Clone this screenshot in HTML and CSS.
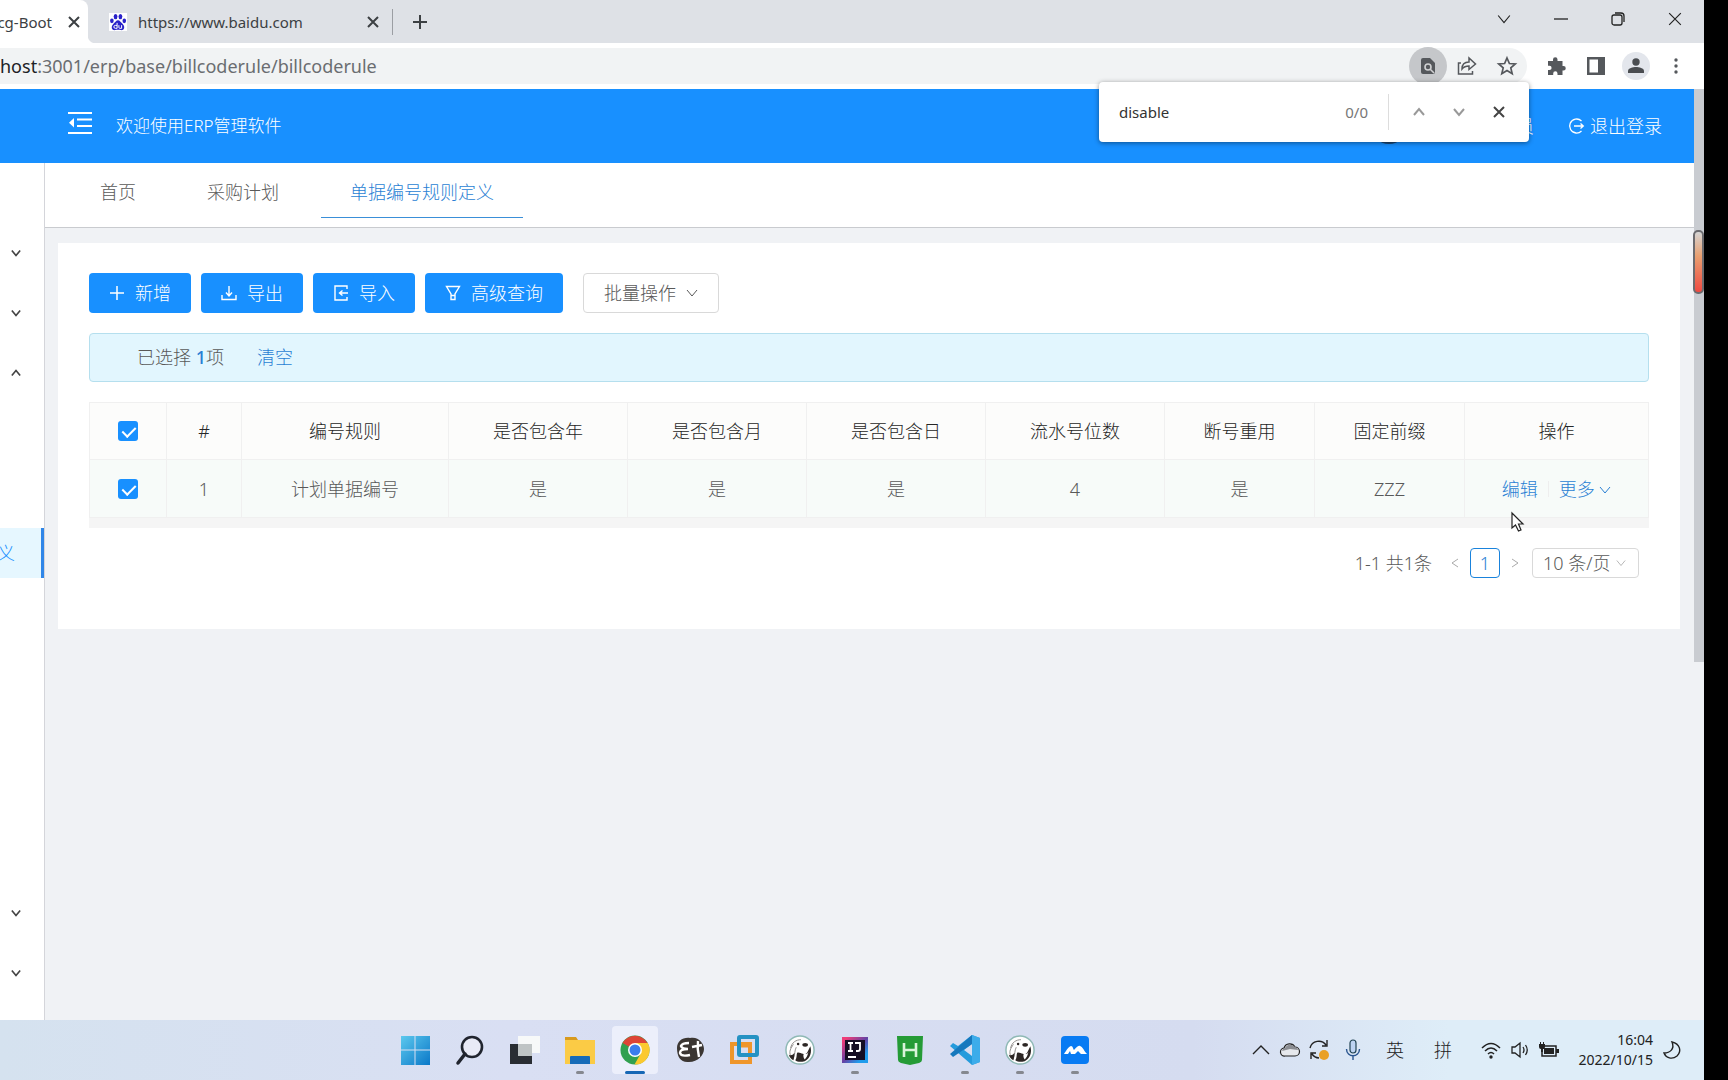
FILE: index.html
```html
<!DOCTYPE html>
<html lang="zh-CN">
<head>
<meta charset="utf-8">
<meta name="viewport" content="width=device-width, initial-scale=1">
<title>单据编号规则定义</title>
<link rel="stylesheet" href="styles.css">
</head>
<body>
<svg width="0" height="0" class="sprite" aria-hidden="true">
  <symbol id="x" viewBox="0 0 12 12"><path d="M1 1l10 10M11 1L1 11" fill="none" stroke="currentColor"/></symbol>
  <symbol id="down" viewBox="0 0 12 12"><path d="M1 3l5 6 5-6" fill="none" stroke="currentColor"/></symbol>
  <symbol id="up" viewBox="0 0 12 12"><path d="M1 9l5-6 5 6" fill="none" stroke="currentColor"/></symbol>
  <symbol id="beaver" viewBox="0 0 32 32">
    <circle cx="16" cy="16" r="15" fill="#fff" stroke="#8fb9b5" stroke-width="1.600"/>
    <path d="M6 14c1-6 6-9 11-9M9 10c-3 4-5 8-3 12M12 13c-2 4-1 7-3 11" fill="none" stroke="#8d8a88" stroke-width="1"/>
    <path d="M4 21c1 3 3 5 5 6 1-3 1-5 1-8-2 3-4 3-6 2zM13 19c2-1 4 1 6 1 2 1 4 0 5-2l3-6c2 6 0 13-6 16-4 1-8 1-10-1 2-3 1-6 2-8z" fill="#2c2624"/>
    <path d="M20 20c2 1 4 0 5-2-1 4-2 6-4 8-1-1-2-4-1-6z" fill="#fff"/>
    <ellipse cx="21.500" cy="10.500" rx="3" ry="2" fill="#2c2624"/><circle cx="14" cy="9.500" r="1.300" fill="#2c2624"/>
  </symbol>
</svg>
<div class="desktop">
<main class="screen">
  <div class="tabstrip">
    <div class="btab active"><span class="clip">cg-Boot</span><button class="plain" aria-label="关闭标签页"><svg class="i12 bold"><use href="#x"/></svg></button></div>
    <div class="btab second">
      <svg class="i18" viewBox="0 0 20 20"><rect width="20" height="20" fill="#fff"/><g fill="#2a22c9"><ellipse cx="7.300" cy="4" rx="2.100" ry="3"/><ellipse cx="12.700" cy="4" rx="2.100" ry="3"/><ellipse cx="3.200" cy="8.700" rx="2" ry="2.600"/><ellipse cx="17" cy="8.700" rx="2" ry="2.600"/><path d="M10 8c2 0 3 2 5 4 4 4 1 8-2 7-2-.6-4-.6-6 0-3 1-6-3-2-7 2-2 3-4 5-4z"/></g><path d="M9 11v6H7a1.600 1.600 0 010-3.200h2M11 13.500v2.500q0 1 1 1h2v-3.500" fill="none" stroke="#fff" stroke-width="1.100"/></svg>
      <span class="grow">https://www.baidu.com</span>
      <button class="plain" aria-label="关闭标签页"><svg class="i12 bold"><use href="#x"/></svg></button>
    </div>
    <span class="tabline"></span>
    <button class="plain newtab" aria-label="新建标签页"><svg class="i14" viewBox="0 0 14 14"><path d="M7 0v14M0 7h14" stroke="currentColor" stroke-width="2"/></svg></button>
    <div class="winctl">
      <button class="plain" aria-label="搜索标签页"><svg class="i14 thin"><use href="#down"/></svg></button>
      <button class="plain" aria-label="最小化"><svg class="i14" viewBox="0 0 14 14"><path d="M0 7h14" stroke="currentColor" stroke-width="1.300"/></svg></button>
      <button class="plain" aria-label="还原"><svg class="i14" viewBox="0 0 14 14"><rect x="1" y="3" width="10" height="10" rx="2" fill="none" stroke="currentColor" stroke-width="1.300"/><path d="M4 1h6q3 0 3 3v6" fill="none" stroke="currentColor" stroke-width="1.300"/></svg></button>
      <button class="plain" aria-label="关闭"><svg class="i14 thin"><use href="#x"/></svg></button>
    </div>
  </div>

  <div class="toolbar">
    <div class="omnibox">
      <span class="url"><b>host</b>:3001/erp/base/billcoderule/billcoderule</span>
      <button class="plain find-badge" aria-label="查找"><svg class="i18" viewBox="0 0 18 18"><path d="M2 3q0-2 2-2h7l5 5v9q0 2-2 2H4q-2 0-2-2z" fill="#55585c"/><circle cx="9" cy="10" r="3" fill="none" stroke="#d0d1d3" stroke-width="1.600"/><path d="M11 12l4 4" stroke="#d0d1d3" stroke-width="1.600"/></svg></button>
      <button class="plain" aria-label="分享"><svg class="i20" viewBox="0 0 20 20"><path d="M4 7H1.500v11h14v-3M5 13c0-5 3-7 7-7V2l6.500 6-6.500 5.500V10c-3 0-5 .5-7 3z" fill="none" stroke="currentColor" stroke-width="1.500"/></svg></button>
      <button class="plain" aria-label="收藏"><svg class="i20" viewBox="0 0 20 20"><path d="M10 2l2.400 5.500 5.900.5-4.500 3.900 1.400 5.800L10 14.600l-5.200 3.100 1.400-5.800L1.700 8l5.900-.5z" fill="none" stroke="currentColor" stroke-width="1.700"/></svg></button>
    </div>
    <button class="plain" aria-label="扩展程序"><svg class="i20" viewBox="0 0 20 20"><path d="M2 5h5V3.500a2 2 0 014.500 0V5h5v5h1a2 2 0 010 4.500h-1V19h-5v-1.500a2 2 0 00-4.300 0V19H2v-5h1.500a2 2 0 000-4.200H2z" fill="#55585c"/></svg></button>
    <button class="plain" aria-label="侧边栏"><svg class="i18" viewBox="0 0 18 18"><path d="M0 0h18v18H0zM2.500 2.500v13H11v-13z" fill="#55585c" fill-rule="evenodd"/></svg></button>
    <button class="plain avatar" aria-label="个人资料"><svg class="i16" viewBox="0 0 16 16"><circle cx="8" cy="4" r="3.700" fill="#4a4d51"/><path d="M0 15v-2c0-3 5-4 8-4s8 1 8 4v2z" fill="#4a4d51"/></svg></button>
    <button class="plain" aria-label="菜单"><svg class="i16" viewBox="0 0 16 16"><g fill="#55585c"><circle cx="8" cy="2" r="1.700"/><circle cx="8" cy="8" r="1.700"/><circle cx="8" cy="14" r="1.700"/></g></svg></button>
  </div>

  <form class="findbar">
    <input type="text" value="disable" aria-label="在页面中查找"><span class="count">0/0</span><span class="vline"></span>
    <button type="button" class="plain faint" aria-label="上一个"><svg class="i12 mid"><use href="#up"/></svg></button>
    <button type="button" class="plain faint" aria-label="下一个"><svg class="i12 mid"><use href="#down"/></svg></button>
    <button type="button" class="plain" aria-label="关闭查找"><svg class="i12 bold"><use href="#x"/></svg></button>
  </form>

  <div class="viewport">
    <div class="site">
      <header class="header">
        <button class="plain fold" aria-label="收起菜单"><svg viewBox="0 0 24 22"><path d="M0 1h24M9 7.500h15M9 14h15M0 21h24" stroke="#fff" stroke-width="2"/><path d="M6 6v9.500L1 10.700z" fill="#fff"/></svg></button>
        <span class="grow title">欢迎使用ERP管理软件</span>
        <span class="photo"></span>
        <span class="user">员</span>
        <a class="logout" href="#"><svg class="i16" viewBox="0 0 16 16"><path d="M13.500 3A7 7 0 108 15a7 7 0 005.500-2M6 8h9M12.500 5.500L15.300 8l-2.800 2.500" fill="none" stroke="#fff" stroke-width="1.300"/></svg>退出登录</a>
      </header>
      <div class="body">
        <nav class="side" aria-label="主菜单">
          <button class="plain row" aria-label="展开"><svg class="i10 mid"><use href="#down"/></svg></button>
          <button class="plain row" aria-label="展开"><svg class="i10 mid"><use href="#down"/></svg></button>
          <button class="plain row" aria-label="收起"><svg class="i10 mid"><use href="#up"/></svg></button>
          <span class="row"></span><span class="row"></span>
          <a class="row current" href="#"><span>义</span></a>
          <span class="row"></span><span class="row"></span><span class="row"></span><span class="row"></span><span class="row"></span>
          <button class="plain row" aria-label="展开"><svg class="i10 mid"><use href="#down"/></svg></button>
          <button class="plain row" aria-label="展开"><svg class="i10 mid"><use href="#down"/></svg></button>
        </nav>
        <div class="main">
          <nav class="tabs" aria-label="页签"><a href="#">首页</a><a href="#">采购计划</a><a href="#" class="on">单据编号规则定义</a></nav>
          <section class="card">
            <div class="actions">
              <button class="btn"><svg class="i16" viewBox="0 0 16 16"><path d="M8 1v14M1 8h14" stroke="currentColor" stroke-width="1.500"/></svg>新增</button>
              <button class="btn"><svg class="i16" viewBox="0 0 16 16"><path d="M1 10v4.500h14V10M8 1v9M5 7.500L8 11l3-3.500" fill="none" stroke="currentColor" stroke-width="1.400"/></svg>导出</button>
              <button class="btn"><svg class="i16" viewBox="0 0 16 16"><path d="M14 4V1H2v14h12v-3M15 8H7M9.500 5.500L6.500 8l3 2.500" fill="none" stroke="currentColor" stroke-width="1.400"/></svg>导入</button>
              <button class="btn"><svg class="i16" viewBox="0 0 16 16"><path d="M1.500 1.500h13L10 9v5.500H6V9zM6 10.500h4" fill="none" stroke="currentColor" stroke-width="1.400"/></svg>高级查询</button>
              <button class="btn ghost">批量操作<svg class="i12 thin"><use href="#down"/></svg></button>
            </div>
            <div class="notice"><span>已选择 <b>1</b>项</span><a href="#">清空</a></div>
            <div class="scroller">
            <table>
              <colgroup><col class="c1"><col class="c2"><col class="c3"><col class="c4"><col class="c4"><col class="c4"><col class="c4"><col class="c5"><col class="c5"><col class="c6"></colgroup>
              <thead><tr><th><input type="checkbox" checked aria-label="全选"></th><th>#</th><th>编号规则</th><th>是否包含年</th><th>是否包含月</th><th>是否包含日</th><th>流水号位数</th><th>断号重用</th><th>固定前缀</th><th>操作</th></tr></thead>
              <tbody><tr><td><input type="checkbox" checked aria-label="选择第1行"></td><td>1</td><td>计划单据编号</td><td>是</td><td>是</td><td>是</td><td>4</td><td>是</td><td>ZZZ</td><td><div class="ops"><a href="#">编辑</a><span class="sep"></span><a href="#">更多 <svg class="i12 thin"><use href="#down"/></svg></a></div></td></tr></tbody>
            </table>
            </div>
            <div class="pager">
              <span class="total">1-1 共1条</span>
              <button class="plain" aria-label="上一页"><svg class="i10" viewBox="0 0 10 10"><path d="M8 1L2 5l6 4" fill="none" stroke="currentColor"/></svg></button>
              <button class="page">1</button>
              <button class="plain" aria-label="下一页"><svg class="i10" viewBox="0 0 10 10"><path d="M2 1l6 4-6 4" fill="none" stroke="currentColor"/></svg></button>
              <label class="size"><select aria-label="每页条数"><option>10 条/页</option></select><svg class="i10 thin"><use href="#down"/></svg></label>
            </div>
          </section>
        </div>
      </div>
    </div>
    <div class="scrollbar"><span class="thumb"></span><span class="marker"></span></div>
  </div>

  <footer class="taskbar">
    <div class="apps">
      <button class="plain app" aria-label="开始"><svg viewBox="0 0 30 30"><defs><linearGradient id="w" x2="1" y2="1"><stop stop-color="#5cc8ee"/><stop offset="1" stop-color="#0a78c8"/></linearGradient></defs><path d="M1 1h13.500v13.500H1zM15.500 1H30v13.500H15.500zM1 15.500h13.500V30H1zM15.500 15.500H30V30H15.500z" fill="url(#w)"/></svg></button>
      <button class="plain app" aria-label="搜索"><svg viewBox="0 0 30 30"><circle cx="17" cy="12" r="10" fill="#e8eaf6" stroke="#20242e" stroke-width="2.600"/><path d="M10 19L3 28" stroke="#20242e" stroke-width="3.500" stroke-linecap="round"/></svg></button>
      <button class="plain app" aria-label="任务视图"><svg viewBox="0 0 30 30"><path d="M0 9h22v20H0z" fill="#292d33"/><path d="M8 1h22v17H8z" fill="#f7f9f9"/><path d="M8 9h14v12H8z" fill="#bfc4c5"/></svg></button>
      <button class="plain app" aria-label="文件资源管理器"><svg viewBox="0 0 30 30"><path d="M0 2h11l2 3h17v12H0z" fill="#d89a1d"/><path d="M0 5h30v24H0z" fill="#fbcb45"/><path d="M5 29v-7q0-1 1-1h18q1 0 1 1v7z" fill="#176bb8"/></svg><i class="dot"></i></button>
      <button class="plain app open" aria-label="Chrome"><svg viewBox="0 0 30 30"><circle cx="15" cy="15" r="14.500" fill="#31a04f"/><path d="M15 15L2.500 8A14.500 14.500 0 0127.500 8z" fill="#de4436"/><path d="M15 8h12.800A14.500 14.500 0 0114.500 29.500L21 18z" fill="#fbc92f"/><circle cx="15" cy="15" r="7" fill="#fff"/><circle cx="15" cy="15" r="5.500" fill="#3b7ded"/></svg><i class="dot wide"></i></button>
      <button class="plain app" aria-label="E+"><svg viewBox="0 0 30 30"><path d="M2 13C2 6 8 2 15 3c8-2 14 5 14 11s-6 13-15 13C6 28 2 22 2 13z" fill="#3b3632"/><path d="M14 8q-7 0-8 3 1 3 7 3-8 0-8 4 1 4 10 2M17 12l10-2M23 6q-1 8 1 16" fill="none" stroke="#fff" stroke-width="2.400"/></svg></button>
      <button class="plain app" aria-label="VMware"><svg viewBox="0 0 30 30"><rect x="2" y="9" width="18" height="18" fill="none" stroke="#ef962b" stroke-width="4"/><rect x="9" y="2" width="18" height="18" rx="1" fill="none" stroke="#2592c3" stroke-width="4"/><path d="M11 11h9v3" fill="none" stroke="#ef962b" stroke-width="3"/></svg></button>
      <button class="plain app" aria-label="DBeaver"><svg><use href="#beaver"/></svg></button>
      <button class="plain app" aria-label="IntelliJ IDEA"><svg viewBox="0 0 30 30"><defs><linearGradient id="ij" x2="1" y2="1"><stop offset=".1" stop-color="#ef3c78"/><stop offset=".5" stop-color="#6442a5"/><stop offset=".8" stop-color="#209cec"/></linearGradient></defs><path d="M2 2h26v26H2z" fill="url(#ij)"/><path d="M5 5h20v20H5z" fill="#140e23"/><path d="M8 8h5M10.500 8v8M8 16h5M15 8h5v6q0 2-2 2h-2M8 22h8" fill="none" stroke="#fff" stroke-width="1.800"/></svg><i class="dot"></i></button>
      <button class="plain app" aria-label="HBuilder"><svg viewBox="0 0 30 30"><path d="M2 1h26l-1 24q0 2-3 3l-9 2-9-2q-3-1-3-3z" fill="#259b36"/><path d="M9 8v14M21 8v14M9 15h12" stroke="#d9f3da" stroke-width="2.600"/></svg></button>
      <button class="plain app" aria-label="VS Code"><svg viewBox="0 0 30 30"><path d="M22 0l8 3v24l-8 3-22-19 3-3 5 3zM22 9l-8 6 8 6z" fill="#249bdc" fill-rule="evenodd"/><path d="M3 22l-3-3L22 0v9L3 22z" fill="#1678bd"/><path d="M22 0l8 3v24l-8 3z" fill="#3cacea"/></svg><i class="dot"></i></button>
      <button class="plain app" aria-label="DBeaver"><svg><use href="#beaver"/></svg><i class="dot"></i></button>
      <button class="plain app" aria-label="腾讯会议"><svg viewBox="0 0 30 30"><rect x="1" y="1" width="28" height="28" rx="4" fill="#087bf3"/><path d="M4 19c2-3 4-7 7-8 2 0 2 3 3 4 2-2 4-5 6-4 3 1 4 5 7 8h-6l-3-3-3 3h-4l-1-3-2 3z" fill="#fff"/></svg><i class="dot"></i></button>
    </div>
    <div class="tray">
      <svg class="t20 thin" viewBox="0 0 20 20"><path d="M2 14l8-8 8 8" fill="none" stroke="currentColor" stroke-width="1.400"/></svg>
      <svg class="t20" viewBox="0 0 20 20"><path d="M5 16a4 4 0 01-1-8 6 6 0 0111-1 4.500 4.500 0 010 9z" fill="#e6e8ec" stroke="#222" stroke-width="1.200"/><path d="M2 11q1-3 3-3a6 6 0 0110-1c2 1 3 2 3 3l-8-1z" fill="#8b8d92"/></svg>
      <svg class="t20" viewBox="0 0 20 20"><path d="M1 8a9 9 0 0116-3M18 0v6h-5M10 18a9 9 0 01-7-4M2 19v-6h5" fill="none" stroke="#222" stroke-width="1.400"/><circle cx="15" cy="15" r="5" fill="#e9a025"/></svg>
      <svg class="t20 mic" viewBox="0 0 20 20"><rect x="7" y="0" width="6" height="13" rx="3" fill="#bdd3f2" stroke="#245" stroke-width="1.200"/><path d="M3.500 9c0 9 13 9 13 0M10 16v4" fill="none" stroke="#2a5590" stroke-width="1.400"/></svg>
      <span class="ime">英</span><span class="ime last">拼</span>
      <svg class="t20" viewBox="0 0 20 20"><path d="M1 8q9-9 18 0M4 11q6-6 12 0M7 14q3-3 6 0" fill="none" stroke="#222" stroke-width="1.500"/><circle cx="10" cy="17" r="1.700" fill="#222"/></svg>
      <svg class="t20" viewBox="0 0 20 20"><path d="M2 7h3l5-4v14l-5-4H2zM13 7q2 3 0 6M15.500 5q3.500 5 0 10" fill="none" stroke="#222" stroke-width="1.300"/></svg>
      <svg class="t20" viewBox="0 0 20 20"><path d="M5 6h12v10H3v-5" fill="none" stroke="#222" stroke-width="1.500"/><path d="M5 8h10v6H5zM17 9h3v4h-3zM0 4h6v3q0 2-2 2v3H2V9Q0 9 0 7zM1 2h1v2H1zM4 2h1v2H4z" fill="#222"/></svg>
      <div class="clock"><span>16:04</span><span>2022/10/15</span></div>
      <svg class="t20" viewBox="0 0 20 20"><path d="M10 2c8 2 10 9 5 14-5 4-11 2-13-3 6 0 11-4 8-11z" fill="none" stroke="#222" stroke-width="1.400"/></svg>
    </div>
  </footer>
  <svg class="cursor" viewBox="0 0 13 20"><path d="M1 1v15l3.500-3 3 6 2.500-1-2.500-6H12z" fill="#fff" stroke="#222" stroke-width="1.200"/></svg>
</main>
</div>
</body>
</html>
```

FILE: styles.css
```css
* { box-sizing: border-box; }
body {
  margin: 0;
  background: #000;
  color: #595959;
  font: 300 18px/24px "Noto Sans", "Noto Sans CJK SC Light", "Noto Sans CJK SC", sans-serif;
}
a { color: inherit; text-decoration: none; }
button, input, select { font: inherit; color: inherit; }
.sprite { position: absolute; }
.desktop { padding-right: 24px; }
.screen { position: relative; display: flex; flex-direction: column; min-height: 100vh; background: #f0f2f5; overflow: hidden; }
.plain { display: flex; align-items: center; justify-content: center; flex: none; padding: 0; border: 0; background: none; }
.grow { flex: 1; }
svg { flex: none; overflow: visible; }
.i10 { width: 10px; height: 10px; }
.i12 { width: 12px; height: 12px; }
.i14 { width: 14px; height: 14px; }
.i16 { width: 16px; height: 16px; }
.i18 { width: 18px; height: 18px; }
.i20, .t20 { width: 20px; height: 20px; }
.thin { stroke-width: 1px; }
.mid { stroke-width: 2px; }
.bold { stroke-width: 2px; }

/* browser chrome */
.tabstrip, .toolbar, .findbar, .taskbar { font-weight: 400; }
.tabstrip { display: flex; align-items: center; height: 43px; background: #dee1e6; color: #3c4043; font-size: 15px; }
.btab { display: flex; align-items: center; height: 43px; }
.active { position: relative; width: 88px; padding-right: 8px; justify-content: flex-end; gap: 16px; background: #fff; border-top-right-radius: 8px; }
.active::after { content: ""; position: absolute; left: 100%; bottom: 0; width: 8px; height: 8px; background: radial-gradient(circle at 100% 0, #dee1e6 8px, #fff 9px); }
.clip { display: flex; justify-content: flex-end; width: 52px; overflow: hidden; white-space: nowrap; }
.second { width: 304px; padding: 0 13px 0 21px; gap: 11px; }
.tabline { width: 1px; height: 26px; background: #9b9ea3; }
.newtab { width: 54px; height: 40px; }
.winctl { display: flex; margin: 0 1px 0 auto; color: #222; }
.winctl button { width: 57px; height: 36px; margin-bottom: 6px; }
.toolbar { display: flex; align-items: center; height: 46px; padding-right: 8px; background: #fff; color: #55585c; }
.toolbar > button { width: 40px; height: 40px; }
.omnibox { display: flex; align-items: center; flex: 1; height: 36px; margin-right: 9px; border-radius: 0 18px 18px 0; background: #f1f3f4; }
.omnibox button { width: 40px; height: 36px; }
.url { flex: 1; color: #6a6d71; }
.url b { font-weight: 400; color: #202124; }
.omnibox .find-badge { height: 38px; width: 38px; border-radius: 50%; background: #c5c7ca; }
.avatar svg { box-sizing: content-box; padding: 6px; border-radius: 50%; background: #e3e6ec; }
.findbar {
  position: absolute; z-index: 3; top: 82px; right: 175px;
  display: flex; align-items: center; width: 430px; height: 60px; padding: 0 10px 0 16px;
  border-radius: 4px; background: #fff; color: #444; font-size: 15px;
  box-shadow: 0 1px 5px rgba(0, 0, 0, .45);
}
.findbar input { flex: 1; min-width: 0; padding: 0 4px; border: 0; outline: 0; color: #333; }
.findbar button { width: 40px; height: 40px; }
.count { color: #777; }
.vline { width: 1px; height: 36px; margin: 0 10px 0 20px; background: #ddd; }
.findbar .faint { color: #999; }

/* application shell */
.viewport { display: flex; flex: 1; }
.site { display: flex; flex-direction: column; flex: 1; }
.header { display: flex; align-items: center; height: 74px; padding: 0 32px 0 68px; background: #1890ff; color: #fff; }
.title { font-size: 17px; }
.fold { width: 24px; margin: 0 24px 6px 0; }
.fold svg { width: 24px; height: 22px; }
.photo { width: 36px; height: 36px; margin-right: 109px; border-radius: 50%; background: #1a4775; }
.user { margin-right: 34px; }
.logout { display: flex; align-items: center; gap: 6px; }
.body { display: flex; flex: 1; }
.side { display: flex; flex-direction: column; gap: 10px; width: 45px; padding-top: 65px; border-right: 1px solid #d4d5da; background: #fff; }
.row { display: flex; align-items: center; justify-content: flex-start; height: 50px; padding-left: 11px; color: #444; }
.current { padding: 0; background: #e6f7ff; border-right: 3px solid #2f86e8; color: #1890ff; }
.current span { display: flex; justify-content: flex-end; width: 15px; overflow: hidden; }
.main { flex: 1; min-width: 0; }
.tabs { display: flex; gap: 13px; height: 65px; padding: 0 26px; border-bottom: 1px solid #c9cbcf; background: #fff; }
.tabs a { height: 55px; padding: 17px 29px 0; }
.tabs .on { border-bottom: 1px solid #3a8fd8; color: #2a7fd4; }

/* list card */
.card { margin: 15px 14px 0 13px; padding: 30px 31px 51px; background: #fff; }
.actions { display: flex; gap: 10px; }
.btn { display: flex; align-items: center; gap: 10px; height: 40px; padding: 0 20px; border: 0; border-radius: 4px; background: #1890ff; color: #fff; }
.ghost { margin-left: 10px; padding: 0 20px; border: 1px solid #d9d9d9; background: #fff; color: #595959; }
.notice { display: flex; gap: 33px; height: 49px; margin: 20px 0; padding: 11px 47px; border: 1px solid #b5dfee; border-radius: 4px; background: #e2f6fe; }
.notice b { font-weight: 500; color: #2a7fd4; }
.notice a, .ops { color: #2a7fd4; }
.scroller { padding-bottom: 10px; background: #f5f5f5; }
table { width: 100%; table-layout: fixed; border-collapse: separate; border-spacing: 0; border: 1px solid #f0f0f0; border-width: 1px 0 0 1px; }
th, td { padding: 0; border: 1px solid #f0f0f0; border-width: 0 1px 1px 0; text-align: center; font-weight: 300; }
th { height: 57px; background: #fcfcfb; color: #262626; }
td { height: 58px; background: #f7fbf9; }
.c1 { width: 77px; }
.c2 { width: 75px; }
.c3 { width: 207px; }
.c4 { width: 179px; }
.c5 { width: 150px; }
input[type="checkbox"] { display: block; appearance: none; position: relative; width: 20px; height: 20px; margin: 0 auto; border-radius: 3px; background: #1890ff; }
input[type="checkbox"]::after { content: ""; position: absolute; left: 7px; top: 3px; width: 6px; height: 11px; border: solid #fff; border-width: 0 2px 2px 0; transform: rotate(45deg); }
.ops { display: flex; align-items: center; justify-content: center; gap: 10px; }
.sep { width: 1px; height: 16px; background: #eee; }
.pager { display: flex; align-items: center; justify-content: flex-end; height: 30px; margin: 20px 10px 0 0; }
.pager .plain { width: 30px; height: 30px; color: #aaa; }
.total { margin-right: 8px; }
.page { width: 30px; height: 30px; padding: 0; border: 1px solid #1a83dc; border-radius: 4px; background: #fff; color: #2a7fd4; }
.size { display: flex; align-items: center; width: 107px; height: 30px; margin-left: 2px; padding: 0 12px 0 10px; border: 1px solid #d9d9d9; border-radius: 4px; color: #aaa; }
.size select { flex: 1; min-width: 0; padding: 0; border: 0; appearance: none; background: none; color: #595959; }

.scrollbar { position: relative; width: 10px; background: #f0f2f5; }
.thumb { display: block; height: 573px; background: #c9ccd1; }
.marker { position: absolute; top: 141px; right: 0; width: 11px; height: 64px; border: 2px solid #6b6b6f; border-radius: 5px; background: linear-gradient(#d5d5d5, #e9a070 40%, #ef4a42); }

/* desktop taskbar */
.taskbar { display: flex; align-items: center; height: 60px; padding: 0 22px 0 392px; background: linear-gradient(90deg, #d5e2ef, #d9dff3 30%, #d5dcf0 70%, #deedf8 85%); color: #222; }
.apps { display: flex; gap: 9px; }
.app { position: relative; width: 46px; height: 48px; border-radius: 4px; }
.app > svg { width: 30px; height: 30px; }
.open { background: #eceffb; }
.dot { position: absolute; bottom: 0; left: 19px; width: 8px; height: 3px; border-radius: 2px; background: #85888f; }
.dot.wide { left: 13px; width: 20px; background: #1667b5; }
.tray { display: flex; align-items: center; gap: 9px; margin-left: auto; }
.mic { margin: 0 5px; }
.ime { width: 20px; margin: 0 10px 0 9px; }
.last { margin-right: 18px; }
.clock { display: flex; flex-direction: column; width: 85px; text-align: right; font-size: 14px; line-height: 20px; }
.cursor { position: absolute; z-index: 4; top: 512px; right: 180px; width: 13px; height: 20px; }
```
